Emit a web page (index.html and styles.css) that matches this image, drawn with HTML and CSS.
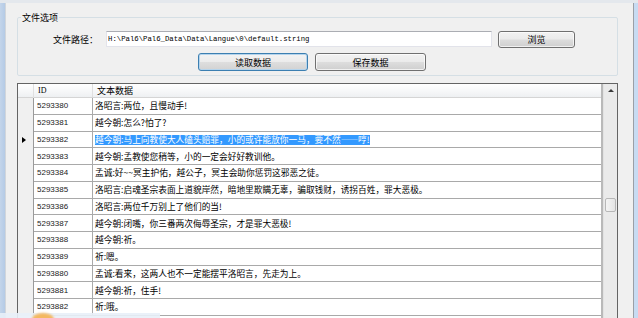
FILE: index.html
```html
<!DOCTYPE html>
<html lang="zh-CN">
  <head>
    <meta charset="UTF-8" />
    <title>文本数据编辑</title>
    <link rel="stylesheet" href="styles.css">
  </head>
  <body>
    <div class="screen">
      <div class="frame-left"></div>
      <div class="form">
        <fieldset class="options">
          <legend>文件选项</legend>
          <div class="path-row">
            <label for="path">文件路径：</label>
            <input id="path" class="path" type="text" value="H:\Pal6\Pal6_Data\Data\Langue\0\default.string" />
            <button class="btn browse">浏览</button>
          </div>
          <div class="action-row">
            <button class="btn wide focused">读取数据</button>
            <button class="btn wide">保存数据</button>
          </div>
        </fieldset>

        <div class="grid">
          <div class="rows">
            <div class="row head">
              <div class="rh"></div>
              <div class="c-id">ID</div>
              <div class="c-text">文本数据</div>
            </div>
            <div class="row"><div class="rh"></div><div class="c-id">5293380</div><div class="c-text">洛昭言:两位，且慢动手!</div></div>
            <div class="row"><div class="rh"></div><div class="c-id">5293381</div><div class="c-text">越今朝:怎么?怕了?</div></div>
            <div class="row current">
              <div class="rh"><span class="marker"></span></div>
              <div class="c-id">5293382</div>
              <div class="c-text"><span class="sel">越今朝:马上向教使大人磕头赔罪，小的或许能放你一马，要不然——哼!</span></div>
            </div>
            <div class="row"><div class="rh"></div><div class="c-id">5293383</div><div class="c-text">越今朝:孟教使您稍等，小的一定会好好教训他。</div></div>
            <div class="row"><div class="rh"></div><div class="c-id">5293384</div><div class="c-text">孟诚:好~~冥主护佑，越公子，冥主会助你惩罚这邪恶之徒。</div></div>
            <div class="row"><div class="rh"></div><div class="c-id">5293385</div><div class="c-text">洛昭言:启魂圣宗表面上道貌岸然，暗地里欺瞒无辜，骗取钱财，诱拐百姓，罪大恶极。</div></div>
            <div class="row"><div class="rh"></div><div class="c-id">5293386</div><div class="c-text">洛昭言:两位千万别上了他们的当!</div></div>
            <div class="row"><div class="rh"></div><div class="c-id">5293387</div><div class="c-text">越今朝:闭嘴，你三番两次侮辱圣宗，才是罪大恶极!</div></div>
            <div class="row"><div class="rh"></div><div class="c-id">5293388</div><div class="c-text">越今朝:祈。</div></div>
            <div class="row"><div class="rh"></div><div class="c-id">5293389</div><div class="c-text">祈:嗯。</div></div>
            <div class="row"><div class="rh"></div><div class="c-id">5293880</div><div class="c-text">孟诚:看来，这两人也不一定能摆平洛昭言，先走为上。</div></div>
            <div class="row"><div class="rh"></div><div class="c-id">5293881</div><div class="c-text">越今朝:祈，住手!</div></div>
            <div class="row"><div class="rh"></div><div class="c-id">5293882</div><div class="c-text">祈:哦。</div></div>
          </div>
          <div class="vscroll">
            <div class="arrow-up"></div>
            <div class="thumb"></div>
          </div>
        </div>
      </div>
      <div class="frame-right"></div>
      <div class="glow"></div>
    </div>
  </body>
</html>
```

FILE: styles.css
```css
body {
  margin: 0;
  background-color: #f0f0f0;
  font-family: "Noto Sans CJK SC", "Liberation Sans", sans-serif;
  font-size: 9px;
  color: #000;
}
.screen {
  position: relative;
  width: 638px;
  height: 318px;
  overflow: hidden;
  display: flex;
  border-top: 3px solid #e4e8ed;
  box-sizing: border-box;
}
.frame-left {
  width: 5px;
  flex: none;
  background: linear-gradient(90deg, #c4d5ea, #b5cbe6);
  border-right: 1px solid #d2d6db;
}
.frame-right {
  width: 4px;
  flex: none;
  background: #c7dbf2;
  border-left: 1px solid #9a9fa6;
}
.form {
  width: 627px;
  flex: none;
  padding-left: 11px;
  box-sizing: border-box;
}

/* group box */
.options {
  width: 601px;
  box-sizing: border-box;
  margin: 8px 0 0;
  padding: 7px 0 4px;
  border: 1px solid #d5dfe5;
  border-radius: 2px;
}
.options legend {
  padding: 0 1px;
  margin-left: 3px;
  line-height: 13px;
}
.path-row {
  display: flex;
  align-items: flex-start;
  padding-left: 35px;
  height: 17px;
}
.path-row label {
  width: 45px;
  white-space: nowrap;
  line-height: 17px;
  margin-right: 8px;
}
.path {
  width: 386px;
  height: 16px;
  box-sizing: border-box;
  border: 1px solid #e2e3ea;
  border-top-color: #abadb3;
  padding: 0 0 0 1px;
  margin: 0 6px 0 0;
  font-family: "Liberation Mono", monospace;
  font-size: 7.3px;
  color: #000;
  background: #fff;
}
.btn {
  appearance: none;
  height: 17px;
  padding: 0;
  border: 1px solid #707070;
  border-radius: 3px;
  background: linear-gradient(#f2f2f2 0%, #ebebeb 48%, #dddddd 52%, #cfcfcf 100%);
  font-family: "Noto Sans CJK SC", sans-serif;
  font-size: 9px;
  color: #000;
  box-shadow: inset 0 0 0 1px rgba(255, 255, 255, 0.7);
}
.browse {
  width: 77px;
}
.action-row {
  display: flex;
  gap: 7px;
  margin-top: 5px;
  padding-left: 180px;
}
.wide {
  height: 18px;
  width: 110px;
}
.wide + .wide {
  width: 111px;
}
.focused {
  border-color: #3c7fb1;
  background: linear-gradient(#f3f3f3 0%, #ececec 48%, #dedede 52%, #d2d2d2 100%);
  box-shadow: inset 0 0 0 1px #b5d4ec;
}

/* data grid */
.grid {
  display: flex;
  margin-top: 7px;
  width: 601px;
  height: 260px;
  box-sizing: border-box;
  border: 1px solid #646464;
  border-bottom: none;
  background: #fff;
}
.rows {
  flex: 1;
  border-right: 2px solid #b9b9b9;
}
.row {
  display: grid;
  grid-template-columns: 16px 59px 1fr;
  height: 16.75px;
  box-sizing: border-box;
  border-bottom: 1px solid #a9a9a9;
  align-items: center;
}
.row .rh {
  align-self: stretch;
  background: #f0f0f0;
  border-right: 1px solid #9a9a9a;
  margin-bottom: -1px;
  display: flex;
  align-items: center;
}
.c-id {
  align-self: stretch;
  display: flex;
  align-items: center;
  padding-left: 3px;
  border-right: 1px solid #a9a9a9;
  font-family: "Liberation Sans", sans-serif;
  font-size: 8px;
  color: #222;
}
.c-text {
  padding-left: 2px;
  font-size: 8.7px;
  white-space: nowrap;
  overflow: hidden;
}
.row.head {
  height: 14px;
  border-bottom: 1px solid #d5d5d5;
  background: linear-gradient(#ffffff 0%, #f7f8f9 50%, #eef0f2 100%);
}
.row.head .rh {
  background: transparent;
  border-right: 1px solid #e0e0e0;
}
.row.head .c-id {
  border-right: 1px solid #e0e0e0;
  padding-left: 4px;
  font-family: "Liberation Serif", serif;
  font-size: 8px;
  color: #000;
}
.row.head .c-text {
  padding-left: 4px;
  font-size: 9px;
}
.marker {
  margin-left: 4px;
  width: 0;
  height: 0;
  border-top: 3px solid transparent;
  border-bottom: 3px solid transparent;
  border-left: 4px solid #000;
}
.sel {
  display: inline-block;
  line-height: 10px;
  background: #3399ff;
  color: #fff;
}
.vscroll {
  width: 13px;
  flex: none;
  background: #eaeaea;
  border-left: 1px solid #e2e2e2;
}
.arrow-up {
  height: 14px;
  position: relative;
}
.arrow-up::after {
  content: "";
  position: absolute;
  left: 4px;
  top: 5px;
  border-left: 3px solid transparent;
  border-right: 3px solid transparent;
  border-bottom: 3px solid #3a3a3a;
}
.thumb {
  margin: 100px 1px 0;
  height: 12px;
  border: 1px solid #b7b7b7;
  border-radius: 2px;
  background: linear-gradient(90deg, #f4f4f4, #e4e4e4);
}
.glow {
  position: absolute;
  left: 0;
  bottom: 0;
  width: 160px;
  height: 5px;
  background: rgba(232, 240, 248, 0.9);
}
.glow::after {
  content: "";
  position: absolute;
  left: 32px;
  top: 0;
  width: 22px;
  height: 12px;
  border-radius: 50%;
  background: #f4b860;
  filter: blur(1px);
}
```
